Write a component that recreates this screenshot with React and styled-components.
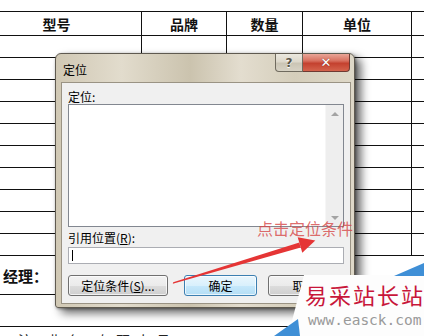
import styled, { createGlobalStyle } from "styled-components";

const GlobalStyle = createGlobalStyle`
  html, body { margin: 0; padding: 0; background: #fff; }
  body { font-family: "Noto Sans CJK SC", sans-serif; }
`;

const Page = styled.div`
  position: relative;
  width: 424px;
  height: 336px;
  overflow: hidden;
  background: #fff;
`;

const Sheet = styled.div`
  margin: 11px 0 0 -28px;
  width: 480px;
  border-top: 1px solid #111;
`;

const Row = styled.div`
  display: grid;
  grid-template-columns: ${(p) => (p.$plain ? "1fr" : "170px 85px 76px 109px 40px")};
  height: ${(p) => p.$h}px;
  box-sizing: border-box;
  border-bottom: 1px solid #111;
`;

const Cell = styled.div`
  border-right: ${(p) => (p.$last ? "none" : "1px solid #111")};
  display: flex;
  align-items: center;
  justify-content: center;
  font-family: "Noto Sans CJK SC", sans-serif;
  font-weight: 700;
  font-size: 14px;
  color: #111;
`;

const FooterCell = styled.div`
  display: flex;
  align-items: center;
  padding-left: 31px;
  font-weight: 700;
  font-size: 15px;
  color: #111;
`;

const Note = styled.div`
  padding: 5px 0 0 46px;
  font-size: 14px;
  line-height: 16px;
  letter-spacing: 6px;
  white-space: nowrap;
  color: #222;
`;

const Dialog = styled.div`
  position: absolute;
  left: 55px;
  top: 53px;
  width: 300px;
  height: 255px;
  box-sizing: border-box;
  border: 1px solid #5f5a50;
  border-radius: 6px 6px 3px 3px;
  padding: 0 3px 3px 5px;
  display: flex;
  flex-direction: column;
  background: linear-gradient(to right, #d0c8b4 0%, #e2dccd 22%, #cbc3ae 45%, #e3ddcf 62%, #d5cebb 80%, #ded8c8 100%);
  box-shadow: 6px 5px 10px rgba(0, 0, 0, 0.6), 1px 1px 3px rgba(0, 0, 0, 0.4);
`;

const TitleBar = styled.div`
  height: 28px;
  display: flex;
  align-items: flex-start;
`;

const Title = styled.div`
  padding: 7px 0 0 2px;
  font-size: 12px;
  color: #000;
`;

const CaptionButtons = styled.div`
  margin: 0 1px 0 auto;
  display: flex;
`;

const CapButton = styled.div`
  width: ${(p) => p.$w}px;
  height: 18px;
  box-sizing: border-box;
  border: 1px solid ${(p) => (p.$close ? "#6e3a32" : "#6f6a5e")};
  border-top: none;
  border-left: ${(p) => (p.$close ? "none" : "1px solid #6f6a5e")};
  border-radius: ${(p) => (p.$close ? "0 0 4px 0" : "0 0 0 4px")};
  background: ${(p) =>
    p.$close
      ? "linear-gradient(#e9a597 0%, #d8705f 40%, #c4412f 55%, #d4634c 100%)"
      : "linear-gradient(#ebe8df 0%, #ddd8cb 45%, #cbc5b5 55%, #d7d2c4 100%)"};
  display: flex;
  align-items: center;
  justify-content: center;
  font-family: "DejaVu Sans", sans-serif;
  font-weight: 700;
  font-size: ${(p) => (p.$close ? 13 : 12)}px;
  color: ${(p) => (p.$close ? "#fff" : "#5a5548")};
  text-shadow: ${(p) => (p.$close ? "0 0 1px #6a1e14" : "0 1px 0 #fff")};
`;

const Client = styled.div`
  flex: 1;
  box-sizing: border-box;
  border: 1px solid #9a9384;
  background: #f0f0f0;
  padding: 0 6px;
  display: flex;
  flex-direction: column;
`;

const Label = styled.div`
  height: ${(p) => p.$h}px;
  padding-top: ${(p) => p.$pt}px;
  box-sizing: border-box;
  font-size: 12px;
  line-height: 14px;
  color: #000;
`;

const ListBox = styled.div`
  height: 123px;
  box-sizing: border-box;
  border: 1px solid #828790;
  background: #fff;
  display: flex;
  justify-content: flex-end;
`;

const ScrollTrack = styled.div`
  width: 17px;
  background: #eeeeee;
  border-left: 1px solid #f6f6f6;
  display: flex;
  flex-direction: column;
  justify-content: space-between;
  align-items: center;
  padding: 7px 0 6px;
`;

const Arrow = styled.div`
  width: 0;
  height: 0;
  border-left: 4px solid transparent;
  border-right: 4px solid transparent;
  ${(p) => (p.$down ? "border-top: 4px solid #a3a3a3;" : "border-bottom: 4px solid #a3a3a3;")}
`;

const Input = styled.div`
  height: 17px;
  box-sizing: border-box;
  border: 1px solid #abadb3;
  background: #fff;
  padding: 2px 0 0 3px;
`;

const Caret = styled.div`
  width: 1px;
  height: 11px;
  background: #000;
`;

const ButtonRow = styled.div`
  margin-top: 11px;
  display: flex;
`;

const Button = styled.div`
  width: ${(p) => p.$w}px;
  margin-left: ${(p) => p.$ml || 0}px;
  height: 21px;
  box-sizing: border-box;
  border: 1px solid ${(p) => (p.$focus ? "#3c7fb1" : "#707070")};
  border-radius: 3px;
  background: ${(p) =>
    p.$focus
      ? "linear-gradient(#eaf6fd 0%, #d9f0fc 50%, #c6e8fb 51%, #b4def5 100%)"
      : "linear-gradient(#f2f2f2 0%, #ebebeb 50%, #dddddd 51%, #cfcfcf 100%)"};
  box-shadow: inset 0 0 0 1px rgba(255, 255, 255, 0.7);
  display: flex;
  align-items: center;
  justify-content: center;
  font-size: 12px;
  color: #000;
`;

const Callout = styled.div`
  position: absolute;
  left: 257px;
  top: 219px;
  font-size: 16px;
  line-height: 18px;
  color: rgba(214, 70, 70, 0.8);
`;

const ArrowSvg = styled.svg`
  position: absolute;
  left: 0;
  top: 0;
  pointer-events: none;
`;

const Watermark = styled.div`
  position: absolute;
  right: 0;
  bottom: 0;
  width: 154px;
  height: 74px;
`;

const WatermarkShape = styled.svg`
  position: absolute;
  left: 0;
  top: 0;
`;

const WatermarkText = styled.div`
  position: relative;
  padding: 19px 0 0 35px;
  display: flex;
  flex-direction: column;
  white-space: nowrap;
`;

const Brand = styled.div`
  font-family: "Noto Sans CJK SC", serif;
  font-size: 22px;
  line-height: 26px;
  letter-spacing: 2px;
  color: #c8163a;
`;

const Url = styled.div`
  margin: 4px 0 0 3px;
  font-family: "DejaVu Sans Mono", monospace;
  font-size: 14.5px;
  line-height: 18px;
  color: #9a9a9a;
`;

const headers = ["型号", "品牌", "数量", "单位", ""];

export default function App() {
  const bodyRows = Array.from({ length: 10 });
  return (
    <Page>
      <GlobalStyle />
      <Sheet>
        <Row $h={24}>
          {headers.map((h, i) => (
            <Cell key={i} $last={i === 4}>
              {h}
            </Cell>
          ))}
        </Row>
        {bodyRows.map((_, r) => (
          <Row key={r} $h={22}>
            {headers.map((_, i) => (
              <Cell key={i} $last={i === 4} />
            ))}
          </Row>
        ))}
        <Row $h={39} $plain>
          <FooterCell>经理：</FooterCell>
        </Row>
        <Row $h={32} $plain />
        <Note>注 业务 专职人员</Note>
      </Sheet>

      <Dialog>
        <TitleBar>
          <Title>定位</Title>
          <CaptionButtons>
            <CapButton $w={28}>?</CapButton>
            <CapButton $w={47} $close>
              ✕
            </CapButton>
          </CaptionButtons>
        </TitleBar>
        <Client>
          <Label $h={21} $pt={7}>
            定位:
          </Label>
          <ListBox>
            <ScrollTrack>
              <Arrow />
              <Arrow $down />
            </ScrollTrack>
          </ListBox>
          <Label $h={20} $pt={4}>
            引用位置(<u>R</u>):
          </Label>
          <Input>
            <Caret />
          </Input>
          <ButtonRow>
            <Button $w={100}>
              定位条件(<u>S</u>)...
            </Button>
            <Button $w={73} $ml={16} $focus>
              确定
            </Button>
            <Button $w={73} $ml={11}>
              取消
            </Button>
          </ButtonRow>
        </Client>
      </Dialog>

      <Callout>点击定位条件</Callout>

      <ArrowSvg width="424" height="336" viewBox="0 0 424 336">
        <polygon points="172.8,283.7 173.2,282.3 299.3,242.6 300.7,247.4" fill="#e53535" />
        <polygon points="315.3,240.4 302.3,252.7 297.7,237.3" fill="#e53535" />
      </ArrowSvg>

      <Watermark>
        <WatermarkShape width="154" height="74" viewBox="0 0 154 74">
          <polygon points="34,13 154,13 154,74 18,74" fill="#fdfdfd" />
          <polygon points="124,14 154,1 154,14" fill="#3f8fd6" />
          <polygon points="4,74 28,57 30,74" fill="#3f8fd6" />
        </WatermarkShape>
        <WatermarkText>
          <Brand>易采站长站</Brand>
          <Url>www.easck.com</Url>
        </WatermarkText>
      </Watermark>
    </Page>
  );
}
